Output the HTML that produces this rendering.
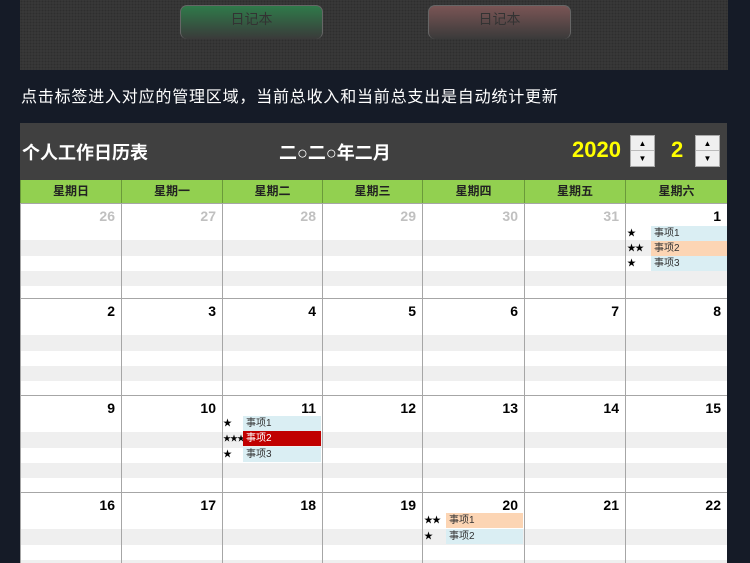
<!DOCTYPE html>
<html><head><meta charset="utf-8"><style>
*{margin:0;padding:0;box-sizing:border-box}
body{width:750px;height:563px;overflow:hidden;background:#151b27;font-family:"Liberation Sans","Noto Sans CJK SC",sans-serif;position:relative}
.top{position:absolute;left:20px;top:0;width:708px;height:70px;background:#3a3a3a;background-image:radial-gradient(#2e2e2e 1px,transparent 1.2px);background-size:3px 3px}
.btn{position:absolute;top:5px;width:143px;height:34px;border-radius:7px;border:1px solid #666;border-bottom:none;font-size:14px;color:#333;text-align:center;line-height:26px}
.g{left:180px;background:linear-gradient(#2f7a4a,#3a3a3a)}
.r{left:428px;background:linear-gradient(#7a5555,#3a3a3a)}
.tip{position:absolute;left:21px;top:83px;color:#fff;font-size:16px;letter-spacing:0.8px;white-space:nowrap}
.hd{position:absolute;left:20px;top:123px;width:707px;height:57px;background:#404040}
.t1{position:absolute;left:2px;top:16px;color:#fff;font-size:18px;font-weight:bold}
.t2{position:absolute;left:259px;top:16px;color:#fff;font-size:18px;font-weight:bold}
.yr{position:absolute;top:14px;color:#ffff00;font-size:22px;font-weight:bold}
.sp{position:absolute;top:12px;width:25px;height:32px;background:#f0f0f0;border:1px solid #aaa}
.sp div{height:15px;font-size:8px;text-align:center;line-height:15px;color:#000}
.sp div:first-child{border-bottom:1px solid #bbb}
.wk{position:absolute;top:180px;height:23px;background:#92d050;border-left:1px solid #6a9a3a;font-size:12px;font-weight:bold;text-align:center;line-height:23px;color:#222}
.c{position:absolute;border-left:1px solid #a6a6a6;border-top:1px solid #a6a6a6;background:linear-gradient(#fff 0,#fff 36px,#efefef 36px,#efefef 52px,#fff 52px,#fff 67px,#efefef 67px,#efefef 82px,#fff 82px)}
.n{position:absolute;right:6px;top:4px;font-size:14px;font-weight:bold;color:#000}
.p .n{color:#c0c0c0}
.ev{position:absolute;height:15px;font-size:10px;line-height:15px;color:#333;padding-left:3px}
.st{position:absolute;font-size:9px;line-height:15px;color:#000;white-space:nowrap;letter-spacing:-1px}
</style></head><body>
<div class="top"></div>
<div class="btn g">日记本</div><div class="btn r">日记本</div>
<div class="tip">点击标签进入对应的管理区域，当前总收入和当前总支出是自动统计更新</div>
<div class="hd">
<div class="t1">个人工作日历表</div>
<div class="t2">二○二○年二月</div>
<div class="yr" style="left:552px">2020</div>
<div class="sp" style="left:610px"><div>▲</div><div>▼</div></div>
<div class="yr" style="left:651px">2</div>
<div class="sp" style="left:675px"><div>▲</div><div>▼</div></div>
</div>
<div class="wk" style="left:20px;width:101px">星期日</div>
<div class="wk" style="left:121px;width:101px">星期一</div>
<div class="wk" style="left:222px;width:100px">星期二</div>
<div class="wk" style="left:322px;width:100px">星期三</div>
<div class="wk" style="left:422px;width:102px">星期四</div>
<div class="wk" style="left:524px;width:101px">星期五</div>
<div class="wk" style="left:625px;width:102px">星期六</div>

<div class="c p" style="left:20px;top:203px;width:101px;height:95px"><span class="n">26</span></div>
<div class="c p" style="left:121px;top:203px;width:101px;height:95px"><span class="n">27</span></div>
<div class="c p" style="left:222px;top:203px;width:100px;height:95px"><span class="n">28</span></div>
<div class="c p" style="left:322px;top:203px;width:100px;height:95px"><span class="n">29</span></div>
<div class="c p" style="left:422px;top:203px;width:102px;height:95px"><span class="n">30</span></div>
<div class="c p" style="left:524px;top:203px;width:101px;height:95px"><span class="n">31</span></div>
<div class="c" style="left:625px;top:203px;width:102px;height:95px"><span class="n">1</span></div>

<div class="c" style="left:20px;top:298px;width:101px;height:97px"><span class="n">2</span></div>
<div class="c" style="left:121px;top:298px;width:101px;height:97px"><span class="n">3</span></div>
<div class="c" style="left:222px;top:298px;width:100px;height:97px"><span class="n">4</span></div>
<div class="c" style="left:322px;top:298px;width:100px;height:97px"><span class="n">5</span></div>
<div class="c" style="left:422px;top:298px;width:102px;height:97px"><span class="n">6</span></div>
<div class="c" style="left:524px;top:298px;width:101px;height:97px"><span class="n">7</span></div>
<div class="c" style="left:625px;top:298px;width:102px;height:97px"><span class="n">8</span></div>

<div class="c" style="left:20px;top:395px;width:101px;height:97px"><span class="n">9</span></div>
<div class="c" style="left:121px;top:395px;width:101px;height:97px"><span class="n">10</span></div>
<div class="c" style="left:222px;top:395px;width:100px;height:97px"><span class="n">11</span></div>
<div class="c" style="left:322px;top:395px;width:100px;height:97px"><span class="n">12</span></div>
<div class="c" style="left:422px;top:395px;width:102px;height:97px"><span class="n">13</span></div>
<div class="c" style="left:524px;top:395px;width:101px;height:97px"><span class="n">14</span></div>
<div class="c" style="left:625px;top:395px;width:102px;height:97px"><span class="n">15</span></div>

<div class="c" style="left:20px;top:492px;width:101px;height:71px"><span class="n">16</span></div>
<div class="c" style="left:121px;top:492px;width:101px;height:71px"><span class="n">17</span></div>
<div class="c" style="left:222px;top:492px;width:100px;height:71px"><span class="n">18</span></div>
<div class="c" style="left:322px;top:492px;width:100px;height:71px"><span class="n">19</span></div>
<div class="c" style="left:422px;top:492px;width:102px;height:71px"><span class="n">20</span></div>
<div class="c" style="left:524px;top:492px;width:101px;height:71px"><span class="n">21</span></div>
<div class="c" style="left:625px;top:492px;width:102px;height:71px"><span class="n">22</span></div>

<span class="st" style="left:627px;top:226px">★</span><div class="ev" style="left:651px;top:226px;width:76px;background:#daeef3">事项1</div>
<span class="st" style="left:627px;top:241px">★★</span><div class="ev" style="left:651px;top:241px;width:76px;background:#fcd5b4">事项2</div>
<span class="st" style="left:627px;top:256px">★</span><div class="ev" style="left:651px;top:256px;width:76px;background:#daeef3">事项3</div>

<span class="st" style="left:223px;top:416px">★</span><div class="ev" style="left:243px;top:416px;width:78px;background:#daeef3">事项1</div>
<span class="st" style="left:223px;top:431px;font-size:8px">★★★</span><div class="ev" style="left:243px;top:431px;width:78px;background:#c00000;color:#fff">事项2</div>
<span class="st" style="left:223px;top:447px">★</span><div class="ev" style="left:243px;top:447px;width:78px;background:#daeef3">事项3</div>

<span class="st" style="left:424px;top:513px">★★</span><div class="ev" style="left:446px;top:513px;width:77px;background:#fcd5b4">事项1</div>
<span class="st" style="left:424px;top:529px">★</span><div class="ev" style="left:446px;top:529px;width:77px;background:#daeef3">事项2</div>
</body></html>
